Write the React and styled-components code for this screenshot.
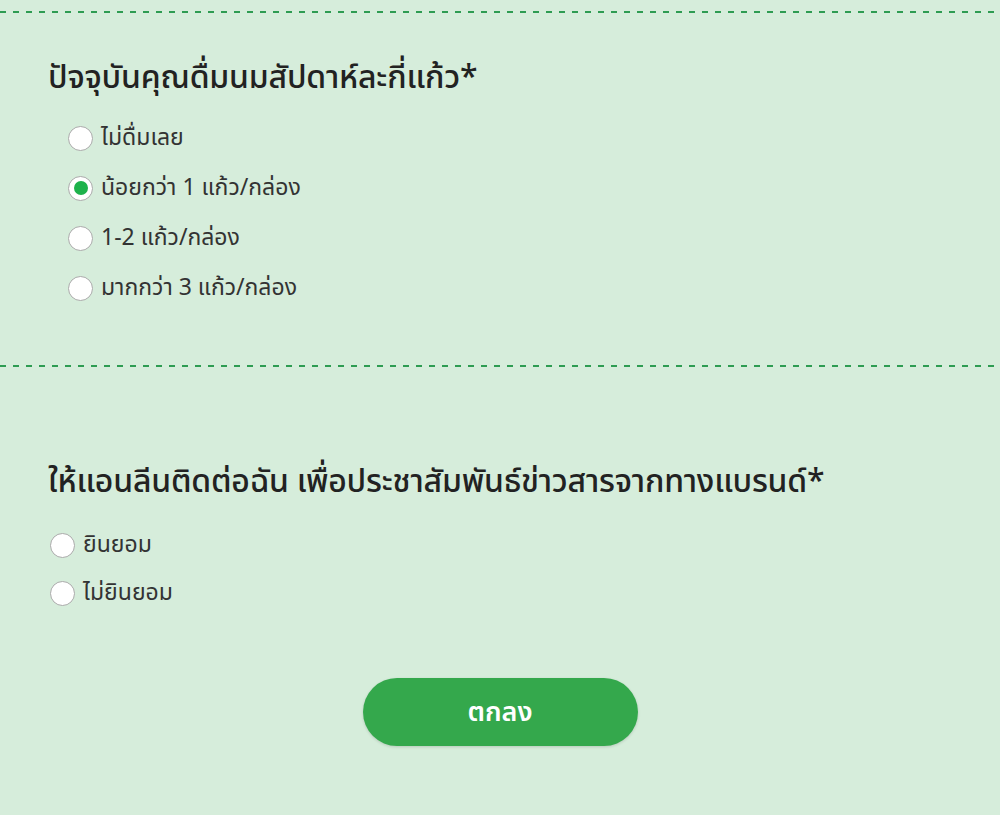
import React, { useState } from "react";
import styled, { createGlobalStyle } from "styled-components";

const GlobalStyle = createGlobalStyle`
    html, body {
        margin: 0;
        padding: 0;
        background: #d6eddb;
    }
    body {
        font-family: "Noto Sans Thai", "Noto Sans", "Liberation Sans", sans-serif;
        color: #222;
    }
`;

const Page = styled.div`
    width: 1000px;
    height: 815px;
    background: #d6eddb;
    padding-top: 11px;
    box-sizing: border-box;
    overflow: hidden;
`;

const Divider = styled.div`
    height: 2px;
    background: repeating-linear-gradient(
        to right,
        #2e9c52 0,
        #2e9c52 6px,
        transparent 6px,
        transparent 13px
    );
`;

const Section = styled.section`
    padding: ${(p) => p.$pad};
`;

const Question = styled.h2`
    margin: 0 0 ${(p) => p.$gap || "18px"};
    font-size: 32px;
    font-weight: 500;
    line-height: 40px;
    color: #222;
    letter-spacing: -0.2px;
    white-space: nowrap;
`;

const OptionList = styled.div`
    display: flex;
    flex-direction: column;
    gap: ${(p) => p.$gap};
    padding-left: ${(p) => p.$indent};
`;

const Option = styled.label`
    display: flex;
    align-items: center;
    gap: 8px;
    height: 28px;
    font-size: 23px;
    color: #333;
    cursor: pointer;
`;

const Radio = styled.span`
    width: 23px;
    height: 23px;
    border-radius: 50%;
    background: #fff;
    border: 1.5px solid #aaa;
    display: flex;
    align-items: center;
    justify-content: center;
    flex-shrink: 0;

    &::after {
        content: "";
        width: 14px;
        height: 14px;
        border-radius: 50%;
        background: ${(p) => (p.$checked ? "#1db24b" : "transparent")};
    }
`;

const ButtonRow = styled.div`
    display: flex;
    justify-content: center;
    padding-top: 71px;
`;

const SubmitBtn = styled.button`
    width: 275px;
    height: 68px;
    border: none;
    border-radius: 34px;
    background: #34a84c;
    color: #fff;
    font-family: inherit;
    font-size: 27px;
    font-weight: 600;
    box-shadow: 0 1px 3px rgba(0, 0, 0, 0.15);
    cursor: pointer;
`;

const milkOptions = ["ไม่ดื่มเลย", "น้อยกว่า 1 แก้ว/กล่อง", "1-2 แก้ว/กล่อง", "มากกว่า 3 แก้ว/กล่อง"];
const consentOptions = ["ยินยอม", "ไม่ยินยอม"];

const App = () => {
    const [milk, setMilk] = useState(1);
    const [consent, setConsent] = useState(null);

    return (
        <Page>
            <GlobalStyle />
            <Divider />
            <Section $pad="45px 48px 63px">
                <Question $gap="26px">ปัจจุบันคุณดื่มนมสัปดาห์ละกี่แก้ว*</Question>
                <OptionList $gap="22px" $indent="20px">
                    {milkOptions.map((o, i) => (
                        <Option key={o} onClick={() => setMilk(i)}>
                            <Radio $checked={milk === i} />
                            {o}
                        </Option>
                    ))}
                </OptionList>
            </Section>
            <Divider />
            <Section $pad="95px 48px 0">
                <Question $gap="29px">ให้แอนลีนติดต่อฉัน เพื่อประชาสัมพันธ์ข่าวสารจากทางแบรนด์*</Question>
                <OptionList $gap="20px" $indent="2px">
                    {consentOptions.map((o, i) => (
                        <Option key={o} onClick={() => setConsent(i)}>
                            <Radio $checked={consent === i} />
                            {o}
                        </Option>
                    ))}
                </OptionList>
                <ButtonRow>
                    <SubmitBtn>ตกลง</SubmitBtn>
                </ButtonRow>
            </Section>
        </Page>
    );
};

export default App;
